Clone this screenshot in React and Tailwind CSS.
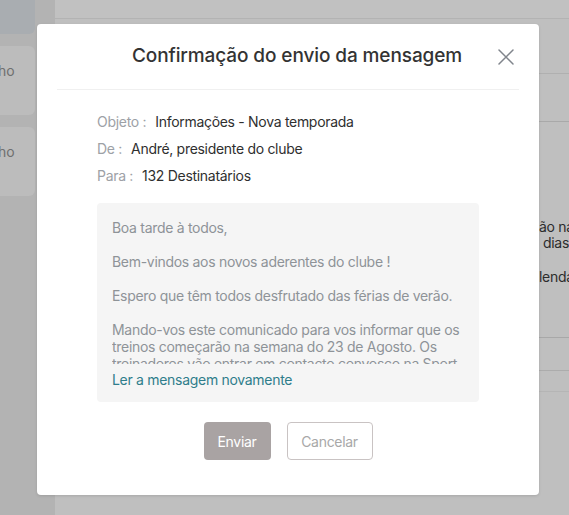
import React from 'react'

function Sidebar() {
  return (
    <aside className="flex w-[55px] shrink-0 flex-col bg-[#b3b3b3]">
      <div className="h-[34px] w-[35px] rounded-br-[6px] bg-[#a9adb1]" />
      {[0, 1].map((i) => (
        <div key={i} className="mt-[12px] h-[69px] w-[35px] rounded-r-[6px] bg-[#bcbcbc] pt-[16px]">
          <span className="-ml-[2px] block text-[14px] leading-[18px] text-[#6f6f6f]">ho</span>
        </div>
      ))}
    </aside>
  )
}

function Backdrop() {
  return (
    <main className="flex flex-1 flex-col bg-[#bfbfbf]">
      <div className="h-[19px] border-b border-[#b3b3b3] bg-[#c1c1c1]" />
      <div className="h-[55px] border-b border-[#b0b0b0]" />
      <div className="h-[48px] border-b border-[#a9a9a9]" />
      <div className="flex flex-col items-end pt-[97px] text-[14px] leading-[16px] tracking-[-0.3px] text-[#2c2c2c]">
        <div className="w-[30px] overflow-hidden whitespace-nowrap">ão na</div>
        <div className="w-[30px] overflow-hidden whitespace-nowrap pl-[4px]">dias</div>
        <div className="mt-[18px] w-[30px] overflow-hidden whitespace-nowrap">lenda</div>
      </div>
      <div className="h-[53px] border-b border-[#a8a8a8]" />
      <div className="h-[33px] border-b border-[#acacac]" />
      <div className="h-[21px] border-b border-[#b5b5b5]" />
    </main>
  )
}

function MetaRow({ label, value }) {
  return (
    <div className="flex h-[27px] items-center text-[14px] tracking-[-0.3px]">
      <span className="text-[#9da1a6]">{label}</span>
      <span className="ml-[9px] text-[#2f2f2f]">{value}</span>
    </div>
  )
}

function Modal() {
  return (
    <div className="absolute left-[37px] top-[24px] flex h-[471px] w-[502px] flex-col rounded-[4px] bg-white shadow-[0_1px_3px_rgba(0,0,0,0.12)]">
      <div className="relative mx-[20px] flex h-[66px] items-center justify-center border-b border-[#f0f0f0] pl-[18px]">
        <h2 className="text-[19px] font-medium tracking-[-0.1px] text-[#333333]">Confirmação do envio da mensagem</h2>
        <button className="absolute right-[5px] top-[25px] text-[#80858c]">
          <svg width="16" height="16" viewBox="0 0 16 16" fill="none" stroke="currentColor" strokeWidth="1.5" strokeLinecap="round">
            <path d="M1 1L15 15M15 1L1 15" />
          </svg>
        </button>
      </div>

      <div className="px-[60px] pt-[18px]">
        <MetaRow label="Objeto :" value="Informações - Nova temporada" />
        <MetaRow label="De :" value="André, presidente do clube" />
        <MetaRow label="Para :" value="132 Destinatários" />

        <div className="mt-[14px] h-[199px] rounded-[4px] bg-[#f5f5f5] px-[15px] pt-[16px]">
          <div className="h-[145px] overflow-hidden text-[14px] leading-[17px] tracking-[-0.3px] text-[#8e9398]">
            <p>Boa tarde à todos,</p>
            <p className="mt-[17px]">Bem-vindos aos novos aderentes do clube !</p>
            <p className="mt-[17px]">Espero que têm todos desfrutado das férias de verão.</p>
            <p className="mt-[17px]">
              Mando-vos este comunicado para vos informar que os treinos começarão na semana do 23 de Agosto. Os
              treinadores vão entrar em contacto convosco na Sport-Easy para vos indicar os horários.
            </p>
          </div>
          <a className="mt-[7px] block text-[14px] leading-[17px] tracking-[-0.3px] text-[#2f7d8b]">Ler a mensagem novamente</a>
        </div>

        <div className="mt-[20px] flex justify-center gap-[16px]">
          <button className="h-[38px] w-[67px] rounded-[4px] bg-[#a9a3a3] text-[14px] tracking-[-0.3px] text-white">Enviar</button>
          <button className="h-[38px] w-[86px] rounded-[4px] border border-[#c9c3c3] bg-white text-[14px] tracking-[-0.3px] text-[#a8a8a8]">
            Cancelar
          </button>
        </div>
      </div>
    </div>
  )
}

export default function App() {
  return (
    <div className="relative flex h-[515px] w-[569px] overflow-hidden font-['Inter',sans-serif]">
      <Sidebar />
      <Backdrop />
      <Modal />
    </div>
  )
}
